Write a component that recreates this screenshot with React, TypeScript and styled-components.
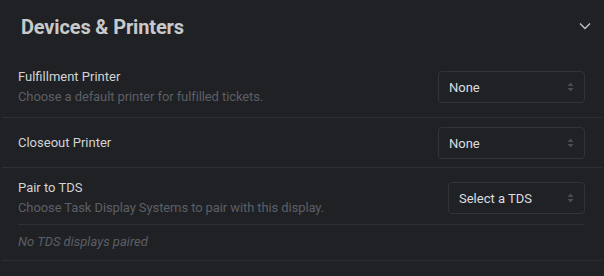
import React from "react";
import styled, { createGlobalStyle } from "styled-components";

const Global = createGlobalStyle`
  html, body { margin: 0; padding: 0; background: #202124; }
  body { font-family: Roboto, "Liberation Sans", sans-serif; }
`;

const Panel = styled.section`
  width: 604px;
  height: 276px;
  background: #202124;
  box-sizing: border-box;
  padding: 0 2px;
`;

const Header = styled.header`
  display: flex;
  align-items: flex-start;
  justify-content: space-between;
  height: 58px;
  box-sizing: border-box;
  padding: 15px 11px 0 19px;
`;

const Title = styled.h2`
  margin: 0;
  font-size: 20px;
  line-height: 24px;
  font-weight: 700;
  color: #c8c9ca;
  letter-spacing: -0.15px;
`;

const Chevron = styled.svg`
  width: 12px;
  height: 12px;
  margin-top: 5px;
  color: #c0c2c6;
`;

const Row = styled.div<{ $pad: string }>`
  display: flex;
  align-items: center;
  justify-content: space-between;
  padding: ${(p) => p.$pad};
  border-bottom: 1px solid #2d2f33;
`;

const Block = styled.div`
  border-bottom: 1px solid #2d2f33;
  padding: 0 17px 0 16px;
`;

const Inner = styled.div`
  display: flex;
  align-items: center;
  justify-content: space-between;
  padding: 12px 0 8px;
  border-bottom: 1px solid #2d2f33;
`;

const TextCol = styled.div`
  display: flex;
  flex-direction: column;
  gap: 4px;
`;

const Label = styled.div`
  font-size: 13px;
  color: #d2d3d5;
  line-height: 16px;
`;

const Hint = styled.div`
  font-size: 13px;
  color: #5b5f66;
  line-height: 16px;
  letter-spacing: -0.1px;
`;

const Empty = styled.div`
  font-size: 13px;
  font-style: italic;
  color: #5b5f66;
  line-height: 16px;
  padding: 9px 0 10px;
`;

const Select = styled.div<{ $w: number }>`
  box-sizing: border-box;
  width: ${(p) => p.$w}px;
  height: 32px;
  border: 1px solid #313337;
  border-radius: 4px;
  display: flex;
  align-items: center;
  justify-content: space-between;
  padding: 0 10px 0 10px;
  font-size: 13px;
  color: #dcdde0;
`;

const Arrows = styled.svg`
  width: 7px;
  height: 10px;
  color: #4a4d53;
`;

const SelectBox = ({ value, w }: { value: string; w: number }) => (
  <Select $w={w}>
    <span>{value}</span>
    <Arrows viewBox="0 0 7 10">
      <path d="M3.5 0.5 L6.5 4 H0.5 Z M3.5 9.5 L6.5 6 H0.5 Z" fill="currentColor" />
    </Arrows>
  </Select>
);

export default function App() {
  return (
    <>
      <Global />
      <Panel>
        <Header>
          <Title>Devices &amp; Printers</Title>
          <Chevron viewBox="0 0 12 12" fill="none">
            <path d="M1 3.5 L6 8.5 L11 3.5" stroke="currentColor" strokeWidth="1.4" />
          </Chevron>
        </Header>
        <Row $pad="11px 17px 12px 16px">
          <TextCol>
            <Label>Fulfillment Printer</Label>
            <Hint>Choose a default printer for fulfilled tickets.</Hint>
          </TextCol>
          <SelectBox value="None" w={147} />
        </Row>
        <Row $pad="9px 17px 8px 16px">
          <Label>Closeout Printer</Label>
          <SelectBox value="None" w={147} />
        </Row>
        <Block>
          <Inner>
            <TextCol>
              <Label>Pair to TDS</Label>
              <Hint>Choose Task Display Systems to pair with this display.</Hint>
            </TextCol>
            <SelectBox value="Select a TDS" w={137} />
          </Inner>
          <Empty>No TDS displays paired</Empty>
        </Block>
      </Panel>
    </>
  );
}
